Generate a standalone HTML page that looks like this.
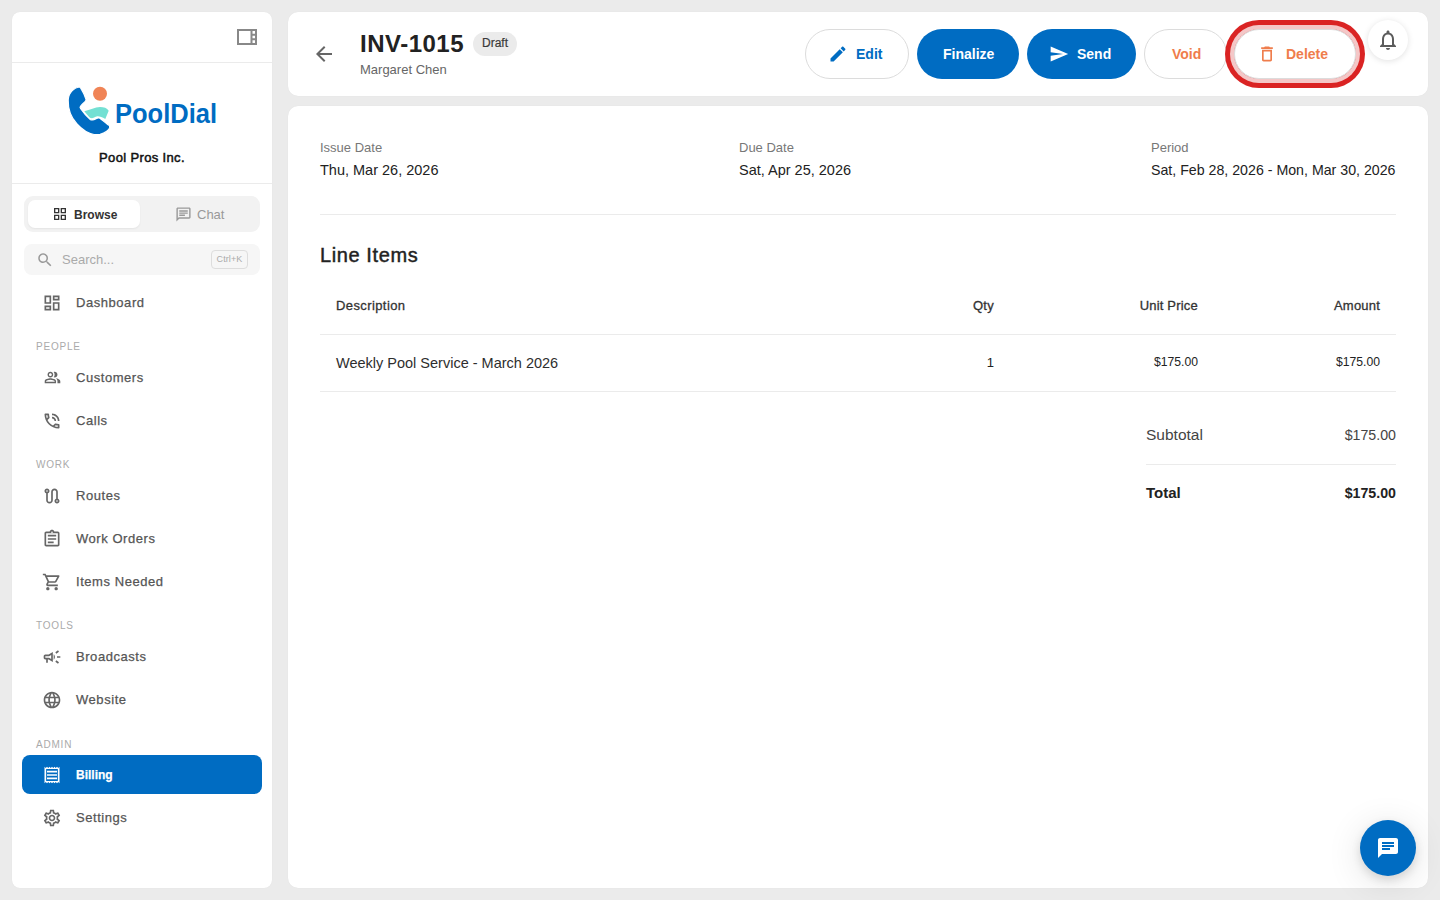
<!DOCTYPE html>
<html><head><meta charset="utf-8">
<style>
*{box-sizing:border-box;margin:0;padding:0}
html,body{width:1440px;height:900px;overflow:hidden;background:#ebebeb;font-family:"Liberation Sans",sans-serif;color:#222}
.abs{position:absolute}
.card{position:absolute;background:#fff;border-radius:10px;box-shadow:0 0 1px rgba(0,0,0,.08)}
#side{left:12px;top:12px;width:260px;height:876px;border-radius:8px}
#hdr{left:288px;top:12px;width:1140px;height:84px}
#main{left:288px;top:106px;width:1140px;height:782px}
.hline{position:absolute;height:1px;background:#ebebeb}
svg{display:block}
.nav{position:absolute;left:10px;width:240px;height:39px;border-radius:8px}
.nav svg{position:absolute;left:20px;top:9.5px;fill:#666}
.nav span{position:absolute;left:54px;top:12px;font-size:13px;color:#555;letter-spacing:.55px;white-space:nowrap;-webkit-text-stroke:.25px currentColor}
.lbl{position:absolute;left:24px;font-size:10px;color:#aaa;letter-spacing:.8px}
.btn{position:absolute;top:17px;height:50px;border-radius:25px;font-size:14px;font-weight:bold;white-space:nowrap}
.btn span{position:absolute;top:16px}
.btn svg{position:absolute;top:15px}
.t{position:absolute;white-space:nowrap}
.semi{-webkit-text-stroke:.3px currentColor}
</style></head><body>

<!-- SIDEBAR -->
<div class="card" id="side">
  <svg class="abs" style="left:223px;top:13px" width="24" height="24" viewBox="0 0 24 24" fill="#888"><path d="M2 4v16h20V4H2zm18 4.67h-2.5V6H20v2.67zm-2.5 2H20v2.67h-2.5v-2.67zM4 6h11.5v12H4V6zm13.5 12v-2.67H20V18h-2.5z"/></svg>
  <div class="hline" style="left:0;top:50px;width:260px"></div>
  <!-- logo -->
  <svg class="abs" style="left:48px;top:68px" width="160" height="60" viewBox="60 80 160 60">
    <path fill="#73e0d3" d="M84.3 111.3 C90 110 95 107 100 107 C104 107 107 108 108.7 110.7 L105.3 119 C102 117 99 116 97.3 116.3 C95 117 93 118.3 92 118.3 C90 118 89.3 117.3 89.3 117.3 Z"/>
    <path fill="#006cc2" stroke="#fff" stroke-width="1.2" d="M79.3 87 C75 87.5 68.5 92 68.2 100 C68 108 70.5 117 77 124 C82 129.5 88 133.5 94 134.5 C96 134.8 98 134.7 100 134.3 C103 133.6 105 132.5 106.7 131.3 C108.5 130 109.5 129 109.7 127.7 C110 126 109 125 108 124.7 C105 122 102 120 100 118.3 C99 117.8 98.5 117.8 98 118 C96 118.8 94 120 92.7 120 C91.5 120 90.5 119.8 90 119.3 C86 116 83 112 80.7 108.7 C80 107.8 80 107 80.3 106.7 C81.5 105 83.5 103 84.7 102 C85.7 101 86.2 100 86 99.3 C85 96 83 92 81.3 89.3 C80.8 88 80 87 79.3 87 Z"/>
    <circle cx="100" cy="93.8" r="7" fill="#f08456"/>
    <text x="115" y="122.7" font-family="Liberation Sans" font-weight="bold" font-size="27" fill="#006cc2" textLength="102" lengthAdjust="spacingAndGlyphs">PoolDial</text>
  </svg>
  <div class="t" style="left:0;width:260px;text-align:center;top:138px;font-size:13px;color:#111;letter-spacing:.35px;-webkit-text-stroke:.5px #111">Pool Pros Inc.</div>
  <div class="hline" style="left:0;top:171px;width:260px"></div>
  <!-- tabs -->
  <div class="abs" style="left:12px;top:184px;width:236px;height:36px;border-radius:9px;background:#f2f2f2"></div>
  <div class="abs" style="left:16px;top:188px;width:112px;height:28px;border-radius:7px;background:#fff;box-shadow:0 1px 2px rgba(0,0,0,.06)"></div>
  <svg class="abs" style="left:40px;top:194px" width="16" height="16" viewBox="0 0 24 24" fill="#333"><path d="M3 3v8h8V3H3zm6 6H5V5h4v4zm-6 4v8h8v-8H3zm6 6H5v-4h4v4zm4-16v8h8V3h-8zm6 6h-4V5h4v4zm-6 4v8h8v-8h-8zm6 6h-4v-4h4v4z"/></svg>
  <div class="t" style="left:62px;top:196px;font-size:12px;font-weight:bold;color:#333">Browse</div>
  <svg class="abs" style="left:162.5px;top:194px" width="17" height="17" viewBox="0 0 24 24" fill="#999"><path d="M4 4h16v12H5.17L4 17.17V4m0-2c-1.1 0-1.99.9-1.99 2L2 22l4-4h14c1.1 0 2-.9 2-2V4c0-1.1-.9-2-2-2H4zm2 10h8v2H6v-2zm0-3h12v2H6V9zm0-3h12v2H6V6z"/></svg>
  <div class="t" style="left:185px;top:195px;font-size:13px;color:#999">Chat</div>
  <!-- search -->
  <div class="abs" style="left:12px;top:232px;width:236px;height:31px;border-radius:8px;background:#f6f6f6"></div>
  <svg class="abs" style="left:24px;top:239px" width="18" height="18" viewBox="0 0 24 24" fill="#999"><path d="M15.5 14h-.79l-.28-.27C15.41 12.59 16 11.11 16 9.5 16 5.91 13.09 3 9.5 3S3 5.91 3 9.5 5.91 16 9.5 16c1.61 0 3.09-.59 4.23-1.57l.27.28v.79l5 4.99L20.49 19l-4.99-5zm-6 0C7.01 14 5 11.99 5 9.5S7.01 5 9.5 5 14 7.01 14 9.5 11.99 14 9.5 14z"/></svg>
  <div class="t" style="left:50px;top:240px;font-size:13px;color:#aaa">Search...</div>
  <div class="abs" style="left:199px;top:238px;width:37px;height:19px;border:1px solid #ddd;border-radius:4px;font-size:9px;color:#aaa;text-align:center;line-height:17px;letter-spacing:.1px">Ctrl+K</div>

  <!-- nav -->
  <div class="nav" style="top:271px"><svg width="20" height="20" viewBox="0 0 24 24"><path d="M19 5v2h-4V5h4M9 5v6H5V5h4m10 8v6h-4v-6h4M9 17v2H5v-2h4M21 3h-8v6h8V3zM11 3H3v10h8V3zm10 8h-8v10h8V11zm-10 4H3v6h8v-6z"/></svg><span>Dashboard</span></div>
  <div class="lbl" style="top:329px">PEOPLE</div>
  <div class="nav" style="top:346px"><svg width="17" height="17" style="left:21.5px;top:11px" viewBox="0 0 24 24"><path d="M16.67 13.13C18.04 14.06 19 15.32 19 17v3h4v-3c0-2.18-3.57-3.47-6.33-3.87zM15 12c2.21 0 4-1.79 4-4s-1.79-4-4-4c-.47 0-.91.1-1.330.24C14.5 5.270 15 6.580 15 8s-.5 2.730-1.330 3.760c.42.14.86.24 1.330.24zm-6 0c2.21 0 4-1.79 4-4s-1.79-4-4-4-4 1.79-4 4 1.79 4 4 4zm0-6c1.1 0 2 .9 2 2s-.9 2-2 2-2-.9-2-2 .9-2 2-2zm0 7c-2.67 0-8 1.34-8 4v3h16v-3c0-2.66-5.33-4-8-4zm6 5H3v-.99C3.2 16.29 6.3 15 9 15s5.8 1.29 6 2v1z"/></svg><span>Customers</span></div>
  <div class="nav" style="top:389px"><svg width="20" height="20" viewBox="0 0 24 24"><path d="M15 12h2c0-2.76-2.24-5-5-5v2c1.66 0 3 1.34 3 3zm4 0h2c0-4.97-4.03-9-9-9v2c3.870 0 7 3.130 7 7zm1 3.5c-1.25 0-2.45-.2-3.57-.57-.1-.03-.21-.05-.31-.05-.26 0-.51.1-.71.29l-2.2 2.2c-2.83-1.44-5.15-3.75-6.59-6.59l2.2-2.21c.28-.26.36-.65.25-1C8.7 6.45 8.5 5.25 8.5 4c0-.55-.45-1-1-1H4c-.55 0-1 .45-1 1 0 9.39 7.61 17 17 17 .55 0 1-.45 1-1v-3.5c0-.55-.45-1-1-1zM5.03 5h1.5c.07.88.22 1.75.45 2.58l-1.2 1.21c-.4-1.21-.66-2.47-.75-3.79zM19 18.970c-1.32-.09-2.6-.35-3.8-.76l1.2-1.2c.85.24 1.72.39 2.6.45v1.51z"/></svg><span>Calls</span></div>
  <div class="lbl" style="top:447px">WORK</div>
  <div class="nav" style="top:464px"><svg width="20" height="20" viewBox="0 0 24 24"><path d="M19 15.18V7c0-2.21-1.79-4-4-4s-4 1.79-4 4v10c0 1.1-.9 2-2 2s-2-.9-2-2V8.82C8.16 8.4 9 7.3 9 6c0-1.66-1.34-3-3-3S3 4.34 3 6c0 1.3.84 2.4 2 2.82V17c0 2.21 1.79 4 4 4s4-1.79 4-4V7c0-1.1.9-2 2-2s2 .9 2 2v8.18c-1.16.41-2 1.51-2 2.82 0 1.66 1.34 3 3 3s3-1.34 3-3c0-1.3-.84-2.4-2-2.82zM6 7c-.55 0-1-.45-1-1s.45-1 1-1 1 .45 1 1-.45 1-1 1zm12 12c-.55 0-1-.45-1-1s.45-1 1-1 1 .45 1 1-.45 1-1 1z"/></svg><span>Routes</span></div>
  <div class="nav" style="top:507px"><svg width="20" height="20" viewBox="0 0 24 24"><path d="M19 3h-4.18C14.4 1.84 13.3 1 12 1s-2.4.84-2.82 2H5c-1.1 0-2 .9-2 2v14c0 1.1.9 2 2 2h14c1.1 0 2-.9 2-2V5c0-1.1-.9-2-2-2zm-7 0c.55 0 1 .45 1 1s-.45 1-1 1-1-.45-1-1 .45-1 1-1zm7 16H5V5h14v14zM7 15h7v2H7zm0-4h10v2H7zm0-4h10v2H7z"/></svg><span>Work Orders</span></div>
  <div class="nav" style="top:550px"><svg width="20" height="20" viewBox="0 0 24 24"><path d="M15.55 13c.75 0 1.41-.41 1.75-1.03l3.58-6.49c.37-.66-.11-1.48-.87-1.48H5.21l-.94-2H1v2h2l3.6 7.59-1.35 2.44C4.52 15.37 5.48 17 7 17h12v-2H7l1.1-2h7.45zM6.16 6h12.15l-2.76 5H8.53L6.16 6zM7 18c-1.1 0-1.99.9-1.99 2S5.9 22 7 22s2-.9 2-2-.9-2-2-2zm10 0c-1.1 0-1.99.9-1.99 2s.89 2 1.990 2 2-.9 2-2-.9-2-2-2z"/></svg><span>Items Needed</span></div>
  <div class="lbl" style="top:608px">TOOLS</div>
  <div class="nav" style="top:625px"><svg width="20" height="20" viewBox="0 0 24 24"><path d="M18 11v2h4v-2h-4zm-2 6.61c.96.71 2.21 1.65 3.2 2.39.4-.53.8-1.07 1.2-1.6-.99-.74-2.24-1.68-3.2-2.4-.4.54-.8 1.08-1.2 1.61zM20.4 5.6c-.4-.53-.8-1.07-1.2-1.6-.99.74-2.24 1.68-3.2 2.4.4.53.8 1.07 1.2 1.6.96-.72 2.21-1.65 3.2-2.4zM4 9c-1.1 0-2 .9-2 2v2c0 1.1.9 2 2 2h1v4h2v-4h1l5 3V6L8 9H4zm5.03 1.71L11 9.53v4.94l-1.97-1.18-.48-.29H4v-2h4.55l.48-.29zM15.5 12c0-1.33-.58-2.53-1.5-3.35v6.69c.92-.81 1.5-2.01 1.5-3.34z"/></svg><span>Broadcasts</span></div>
  <div class="nav" style="top:668px"><svg width="20" height="20" viewBox="0 0 24 24"><path d="M11.99 2C6.47 2 2 6.48 2 12s4.47 10 9.99 10C17.52 22 22 17.52 22 12S17.52 2 11.99 2zm6.93 6h-2.95c-.32-1.25-.78-2.45-1.38-3.56 1.84.63 3.37 1.91 4.33 3.56zM12 4.04c.83 1.2 1.48 2.53 1.91 3.96h-3.82c.43-1.43 1.08-2.76 1.91-3.96zM4.26 14C4.1 13.36 4 12.69 4 12s.1-1.36.26-2h3.38c-.08.66-.14 1.32-.14 2s.06 1.34.14 2H4.26zm.82 2h2.95c.32 1.25.78 2.45 1.38 3.56-1.84-.63-3.37-1.9-4.33-3.56zm2.95-8H5.08c.96-1.66 2.49-2.93 4.33-3.56C8.81 5.55 8.35 6.75 8.03 8zM12 19.96c-.83-1.2-1.48-2.53-1.91-3.96h3.82c-.43 1.43-1.08 2.76-1.91 3.96zM14.34 14H9.66c-.09-.66-.16-1.32-.16-2s.07-1.35.16-2h4.68c.09.65.16 1.32.16 2s-.07 1.34-.16 2zm.25 5.56c.6-1.11 1.06-2.31 1.38-3.56h2.95c-.96 1.65-2.49 2.93-4.33 3.56zM16.36 14c.08-.66.14-1.32.14-2s-.06-1.34-.14-2h3.38c.16.64.26 1.31.26 2s-.1 1.36-.26 2h-3.38z"/></svg><span>Website</span></div>
  <div class="lbl" style="top:727px">ADMIN</div>
  <div class="nav" style="top:743px;background:#006cc2"><svg width="20" height="20" viewBox="0 0 24 24" style="fill:#fff"><path d="M19.5 3.5 18 2l-1.5 1.5L15 2l-1.5 1.5L12 2l-1.5 1.5L9 2 7.5 3.5 6 2 4.5 3.5 3 2v20l1.5-1.5L6 22l1.5-1.5L9 22l1.5-1.5L12 22l1.5-1.5L15 22l1.5-1.5L18 22l1.5-1.5L21 22V2l-1.5 1.5zM19 19.09H5V4.91h14v14.18zM6 15h12v2H6zm0-4h12v2H6zm0-4h12v2H6z"/></svg><span style="color:#fff;font-weight:bold;letter-spacing:0;font-size:12px;top:13px">Billing</span></div>
  <div class="nav" style="top:786px"><svg width="20" height="20" viewBox="0 0 24 24"><path d="M19.43 12.98c.04-.32.07-.64.07-.98 0-.34-.03-.66-.07-.98l2.11-1.65c.19-.15.24-.42.12-.64l-2-3.46c-.09-.16-.26-.25-.44-.25-.06 0-.12.01-.17.03l-2.49 1c-.52-.4-1.08-.73-1.69-.98l-.38-2.65C14.460 2.18 14.25 2 14 2h-4c-.25 0-.46.18-.49.42l-.38 2.65c-.61.25-1.17.59-1.69.98l-2.49-1c-.06-.02-.12-.03-.18-.03-.17 0-.34.09-.43.25l-2 3.46c-.13.22-.07.49.12.64l2.11 1.65c-.04.32-.07.65-.07.98 0 .33.03.66.07.98l-2.11 1.65c-.19.15-.24.42-.12.64l2 3.46c.09.16.26.25.44.25.06 0 .12-.01.17-.03l2.49-1c.52.4 1.08.73 1.69.98l.38 2.65c.03.24.24.42.49.42h4c.25 0 .46-.18.49-.42l.38-2.65c.61-.25 1.17-.59 1.69-.98l2.49 1c.06.02.12.03.18.03.17 0 .34-.09.43-.25l2-3.46c.12-.22.07-.49-.12-.64l-2.11-1.65zm-1.98-1.71c.04.31.05.52.05.73 0 .21-.02.43-.05.73l-.14 1.13.89.7 1.08.84-.7 1.21-1.27-.51-1.04-.42-.9.68c-.43.32-.84.56-1.25.73l-1.06.43-.16 1.13-.2 1.35h-1.4l-.19-1.35-.16-1.13-1.06-.43c-.43-.18-.83-.41-1.23-.71l-.91-.7-1.06.43-1.27.51-.7-1.21 1.08-.84.89-.7-.14-1.13c-.03-.31-.05-.54-.05-.74s.02-.43.05-.73l.14-1.13-.89-.7-1.08-.84.7-1.21 1.27.51 1.04.42.9-.68c.43-.32.84-.56 1.25-.73l1.06-.43.16-1.13.2-1.35h1.39l.19 1.35.16 1.13 1.06.43c.43.18.83.41 1.23.71l.91.7 1.06-.43 1.27-.51.7 1.21-1.07.85-.89.7.14 1.13zM12 8c-2.21 0-4 1.79-4 4s1.79 4 4 4 4-1.79 4-4-1.79-4-4-4zm0 6c-1.1 0-2-.9-2-2s.9-2 2-2 2 .9 2 2-.9 2-2 2z"/></svg><span>Settings</span></div>
</div>

<!-- HEADER -->
<div class="card" id="hdr">
  <svg class="abs" style="left:24px;top:30px" width="24" height="24" viewBox="0 0 24 24" fill="#666"><path d="M20 11H7.83l5.59-5.59L12 4l-8 8 8 8 1.41-1.41L7.83 13H20v-2z"/></svg>
  <div class="t" style="left:72px;top:18px;font-size:24px;font-weight:bold;color:#222;letter-spacing:.5px">INV-1015</div>
  <div class="abs" style="left:185px;top:20px;width:44px;height:24px;border-radius:12px;background:#ebebeb;font-size:12px;color:#3a3a3a;text-align:center;line-height:22px;-webkit-text-stroke:.2px #3a3a3a">Draft</div>
  <div class="t" style="left:72px;top:50px;font-size:13px;color:#666">Margaret Chen</div>

  <div class="btn" style="left:517px;width:104px;border:1px solid #dcdcdc;color:#006cc2"><svg style="left:22px;top:14px" width="20" height="20" viewBox="0 0 24 24" fill="#006cc2"><path d="M3 17.25V21h3.75L17.81 9.94l-3.75-3.75L3 17.25zM20.71 7.04c.39-.39.39-1.02 0-1.41l-2.34-2.34c-.39-.39-1.02-.39-1.41 0l-1.83 1.83 3.75 3.75 1.83-1.83z"/></svg><span style="left:50px">Edit</span></div>
  <div class="btn" style="left:629px;width:102px;background:#006cc2;color:#fff"><span style="left:26px;top:17px">Finalize</span></div>
  <div class="btn" style="left:739px;width:109px;background:#006cc2;color:#fff"><svg style="left:22px" width="20" height="20" viewBox="0 0 24 24" fill="#fff"><path d="M2.01 21 23 12 2.01 3 2 10l15 2-15 2z"/></svg><span style="left:50px;top:17px">Send</span></div>
  <div class="btn" style="left:856px;width:83px;border:1px solid #dcdcdc;color:#ef7d4c"><span style="left:27px">Void</span></div>
  <div class="btn" style="left:946px;width:122px;border:1px solid #dcdcdc;color:#ef7d4c;box-shadow:0 0 0 4px #f4c7c7,0 0 0 9px #da2323"><svg style="left:22px;top:14px" width="20" height="20" viewBox="0 0 24 24" fill="#ef7d4c"><path d="M16 9v10H8V9h8m-1.5-6h-5l-1 1H5v2h14V4h-3.5l-1-1zM18 7H6v12c0 1.1.9 2 2 2h8c1.1 0 2-.9 2-2V7z"/></svg><span style="left:51px">Delete</span></div>
  <div class="abs" style="left:1080px;top:8px;width:40px;height:40px;border-radius:20px;background:#fff;box-shadow:0 1px 6px rgba(0,0,0,.12)"><svg class="abs" style="left:8px;top:8px" width="24" height="24" viewBox="0 0 24 24" fill="#5c5c5c"><path d="M12 22c1.1 0 2-.9 2-2h-4c0 1.1.89 2 2 2zm6-6v-5c0-3.07-1.64-5.64-4.5-6.32V4c0-.83-.67-1.5-1.5-1.5s-1.5.67-1.5 1.5v.68C7.63 5.36 6 7.92 6 11v5l-2 2v1h16v-1l-2-2zm-2 1H8v-6c0-2.48 1.51-4.5 4-4.5s4 2.02 4 4.5v6z"/></svg></div>
</div>

<!-- MAIN -->
<div class="card" id="main">
  <div class="t" style="left:32px;top:34px;font-size:13px;color:#777">Issue Date</div>
  <div class="t" style="left:32px;top:56px;font-size:14.5px;color:#222">Thu, Mar 26, 2026</div>
  <div class="t" style="left:451px;top:34px;font-size:13px;color:#777">Due Date</div>
  <div class="t" style="left:451px;top:56px;font-size:14.5px;color:#222">Sat, Apr 25, 2026</div>
  <div class="t" style="left:863px;top:34px;font-size:13px;color:#777">Period</div>
  <div class="t" style="left:863px;top:56px;font-size:14.2px;color:#222">Sat, Feb 28, 2026 - Mon, Mar 30, 2026</div>
  <div class="hline" style="left:32px;top:108px;width:1076px"></div>

  <div class="t" style="left:32px;top:138px;font-size:20px;color:#222;letter-spacing:.6px;-webkit-text-stroke:.45px #222">Line Items</div>
  <div class="t semi" style="left:48px;top:192px;font-size:13px;color:#333;letter-spacing:.4px">Description</div>
  <div class="t semi" style="right:434px;top:192px;font-size:13px;color:#333;letter-spacing:.3px">Qty</div>
  <div class="t semi" style="right:230px;top:192px;font-size:13px;color:#333;letter-spacing:.2px">Unit Price</div>
  <div class="t semi" style="right:48px;top:192px;font-size:13px;color:#333;letter-spacing:.2px">Amount</div>
  <div class="hline" style="left:32px;top:228px;width:1076px"></div>
  <div class="t" style="left:48px;top:249px;font-size:14.5px;color:#2e2e2e">Weekly Pool Service - March 2026</div>
  <div class="t" style="right:434px;top:249px;font-size:13px;color:#222">1</div>
  <div class="t" style="right:230px;top:249px;font-size:12.2px;color:#222">$175.00</div>
  <div class="t" style="right:48px;top:249px;font-size:12.2px;color:#222">$175.00</div>
  <div class="hline" style="left:32px;top:285px;width:1076px"></div>

  <div class="t" style="left:858px;top:320px;font-size:15.5px;color:#444">Subtotal</div>
  <div class="t" style="right:32px;top:321px;font-size:14.2px;color:#444">$175.00</div>
  <div class="hline" style="left:858px;top:358px;width:250px"></div>
  <div class="t" style="left:858px;top:378px;font-size:15px;font-weight:bold;color:#222">Total</div>
  <div class="t" style="right:32px;top:379px;font-size:14.2px;font-weight:bold;color:#222">$175.00</div>
</div>

<!-- FAB -->
<div class="abs" style="left:1360px;top:820px;width:56px;height:56px;border-radius:28px;background:#006cc2;box-shadow:0 4px 10px rgba(0,0,0,.12),0 6px 36px rgba(0,0,0,.12)"><svg class="abs" style="left:16px;top:16px" width="24" height="24" viewBox="0 0 24 24" fill="#fff"><path d="M20 2H4c-1.1 0-1.99.9-1.99 2L2 22l4-4h14c1.1 0 2-.9 2-2V4c0-1.1-.9-2-2-2zM6 9h12v2H6V9zm8 5H6v-2h8v2zm4-6H6V6h12v2z"/></svg></div>

</body></html>
